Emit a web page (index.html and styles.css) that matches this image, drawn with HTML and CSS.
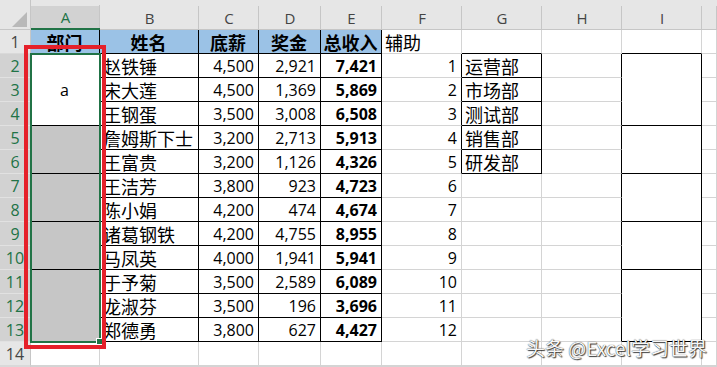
FILE: index.html
```html
<!DOCTYPE html>
<html lang="zh-CN">
<head>
<meta charset="utf-8">
<title>Excel 表格</title>
<link rel="stylesheet" href="styles.css">
</head>
<body>
<div class="sheet">
  <div class="grid">
    <div class="corner"><svg width="31" height="30" viewBox="0 0 31 30"><polygon points="12,27 27,27 27,12" fill="#b9b9b9"/></svg></div>
    <div class="ch on">A</div><div class="ch">B</div><div class="ch">C</div><div class="ch">D</div><div class="ch">E</div><div class="ch">F</div><div class="ch">G</div><div class="ch">H</div><div class="ch">I</div><div class="ch"></div>

    <div class="rh">1</div>
    <div class="c t hd cjk ctr">部门</div><div class="c t hd cjk ctr">姓名</div><div class="c t hd cjk ctr">底薪</div><div class="c t hd cjk ctr">奖金</div><div class="c t hd cjk ctr">总收入</div>
    <div class="c cjk">辅助</div><div class="c bb"></div><div class="c"></div><div class="c bb"></div><div class="c"></div>

    <div class="rh sel">2</div>
    <div class="c t m3 ctr">a</div><div class="c t cjk">赵铁锤</div><div class="c t num">4,500</div><div class="c t num">2,921</div><div class="c t num b">7,421</div>
    <div class="c br num">1</div><div class="c t cjk">运营部</div><div class="c br"></div><div class="c t m3"></div><div class="c"></div>

    <div class="rh sel">3</div>
    <div class="c t cjk">宋大莲</div><div class="c t num">4,500</div><div class="c t num">1,369</div><div class="c t num b">5,869</div>
    <div class="c br num">2</div><div class="c t cjk">市场部</div><div class="c br"></div><div class="c"></div>

    <div class="rh sel">4</div>
    <div class="c t cjk">王钢蛋</div><div class="c t num">3,500</div><div class="c t num">3,008</div><div class="c t num b">6,508</div>
    <div class="c br num">3</div><div class="c t cjk">测试部</div><div class="c br"></div><div class="c"></div>

    <div class="rh sel">5</div>
    <div class="c t m2 gray"></div><div class="c t cjk">詹姆斯下士</div><div class="c t num">3,200</div><div class="c t num">2,713</div><div class="c t num b">5,913</div>
    <div class="c br num">4</div><div class="c t cjk">销售部</div><div class="c br"></div><div class="c t m2"></div><div class="c"></div>

    <div class="rh sel">6</div>
    <div class="c t cjk">王富贵</div><div class="c t num">3,200</div><div class="c t num">1,126</div><div class="c t num b">4,326</div>
    <div class="c br num">5</div><div class="c t cjk">研发部</div><div class="c br"></div><div class="c"></div>

    <div class="rh sel">7</div>
    <div class="c t m2 gray"></div><div class="c t cjk">王洁芳</div><div class="c t num">3,800</div><div class="c t num">923</div><div class="c t num b">4,723</div>
    <div class="c num">6</div><div class="c"></div><div class="c br"></div><div class="c t m2"></div><div class="c"></div>

    <div class="rh sel">8</div>
    <div class="c t cjk">陈小娟</div><div class="c t num">4,200</div><div class="c t num">474</div><div class="c t num b">4,674</div>
    <div class="c num">7</div><div class="c"></div><div class="c br"></div><div class="c"></div>

    <div class="rh sel">9</div>
    <div class="c t m2 gray"></div><div class="c t cjk">诸葛钢铁</div><div class="c t num">4,200</div><div class="c t num">4,755</div><div class="c t num b">8,955</div>
    <div class="c num">8</div><div class="c"></div><div class="c br"></div><div class="c t m2"></div><div class="c"></div>

    <div class="rh sel">10</div>
    <div class="c t cjk">马凤英</div><div class="c t num">4,000</div><div class="c t num">1,941</div><div class="c t num b">5,941</div>
    <div class="c num">9</div><div class="c"></div><div class="c br"></div><div class="c"></div>

    <div class="rh sel">11</div>
    <div class="c t m3 gray"></div><div class="c t cjk">于予菊</div><div class="c t num">3,500</div><div class="c t num">2,589</div><div class="c t num b">6,089</div>
    <div class="c num">10</div><div class="c"></div><div class="c br"></div><div class="c t m3"></div><div class="c"></div>

    <div class="rh sel">12</div>
    <div class="c t cjk">龙淑芬</div><div class="c t num">3,500</div><div class="c t num">196</div><div class="c t num b">3,696</div>
    <div class="c num">11</div><div class="c"></div><div class="c br"></div><div class="c"></div>

    <div class="rh sel">13</div>
    <div class="c t cjk">郑德勇</div><div class="c t num">3,800</div><div class="c t num">627</div><div class="c t num b">4,427</div>
    <div class="c num">12</div><div class="c"></div><div class="c br"></div><div class="c"></div>

    <div class="rh">14</div>
    <div class="c"></div><div class="c"></div><div class="c"></div><div class="c"></div><div class="c"></div><div class="c"></div><div class="c"></div><div class="c"></div><div class="c"></div><div class="c"></div>

    <div class="rh"></div>
    <div class="c"></div><div class="c"></div><div class="c"></div><div class="c"></div><div class="c"></div><div class="c"></div><div class="c"></div><div class="c"></div><div class="c"></div><div class="c"></div>
  </div>

  <div class="selection"></div>
  <div class="handle"></div>
  <div class="redbox"></div>
  <div class="watermark">头条 @Excel学习世界</div>
</div>
</body>
</html>
```

FILE: styles.css
```css
html, body {
  margin: 0;
  padding: 0;
  background: #ffffff;
  overflow: hidden;
}

.sheet {
  position: relative;
  width: 717px;
  height: 367px;
  overflow: hidden;
  font-family: "Open Sans", "Noto Sans CJK SC", sans-serif;
  font-size: 16px;
  color: #000;
}

.grid {
  display: grid;
  grid-template-columns: 31px 69px 99px 60px 62px 61px 80px 80px 80px 80px 1fr;
  grid-template-rows: 30px repeat(14, 24px) 1fr;
  width: 717px;
  height: 367px;
}

.grid > div {
  box-sizing: border-box;
  min-width: 0;
  white-space: nowrap;
}

.corner {
  background: #e6e6e6;
  border-bottom: 1px solid #c6c6c6;
  border-right: 1px solid #c6c6c6;
}
.corner svg { display: block; }

.ch {
  background: linear-gradient(#c6c6c6, #c6c6c6) right bottom / 1px 23px no-repeat, #e6e6e6;
  border-bottom: 1px solid #c6c6c6;
  color: #444;
  font-family: "Open Sans", sans-serif;
  font-size: 15px;
  display: flex;
  align-items: center;
  justify-content: center;
  padding-top: 6px;
}
.ch.on {
  background: linear-gradient(#c6c6c6, #c6c6c6) right bottom / 1px 23px no-repeat, linear-gradient(#e6e6e6, #e6e6e6) top / 100% 6px no-repeat, #d2d2d2;
  border-bottom: 2px solid #217346;
  color: #217346;
}

.rh {
  background: #e6e6e6;
  border-right: 1px solid #c6c6c6;
  border-bottom: 1px solid #d9d9d9;
  color: #444;
  font-family: "Open Sans", sans-serif;
  font-size: 16px;
  line-height: 22px;
  display: flex;
  align-items: center;
  justify-content: center;
}
.rh.sel {
  background: #d2d2d2;
  color: #217346;
  border-bottom-color: #e1e1e1;
}

.c {
  border-right: 1px solid #d4d4d4;
  border-bottom: 1px solid #d4d4d4;
  display: flex;
  align-items: center;
  padding: 0 4px 0 3px;
  line-height: 22px;
}
.c.t { border-right-color: #000; border-bottom-color: #000; }
.c.br { border-right-color: #000; }
.c.bb { border-bottom-color: #000; }

.hd {
  background: #9bc2e6;
  font-weight: 700;
}
.cjk {
  font-family: "Noto Sans CJK SC", sans-serif;
  font-size: 18px;
}
.ctr { justify-content: center; }
.num { justify-content: flex-end; }
.b { font-weight: 700; }

.m3 { grid-row: span 3; }
.m2 { grid-row: span 2; }
.gray { background: #c6c6c6; }

.selection {
  position: absolute;
  left: 30px;
  top: 53px;
  width: 71px;
  height: 290px;
  box-sizing: border-box;
  border: 2px solid #217346;
}
.handle {
  position: absolute;
  left: 96px;
  top: 338px;
  width: 5px;
  height: 5px;
  background: #217346;
  border: 1px solid #ffffff;
}
.redbox {
  position: absolute;
  left: 24px;
  top: 45px;
  width: 82px;
  height: 304px;
  box-sizing: border-box;
  border: 4px solid #e5202a;
}
.watermark {
  position: absolute;
  right: 10px;
  bottom: 8px;
  font-family: "Noto Sans CJK SC", sans-serif;
  font-size: 19px;
  line-height: 22px;
  color: #f7f7f7;
  text-shadow: 1px 1px 1px rgba(0, 0, 0, 0.75), 0 0 1px rgba(0, 0, 0, 0.9);
  white-space: nowrap;
}
```
